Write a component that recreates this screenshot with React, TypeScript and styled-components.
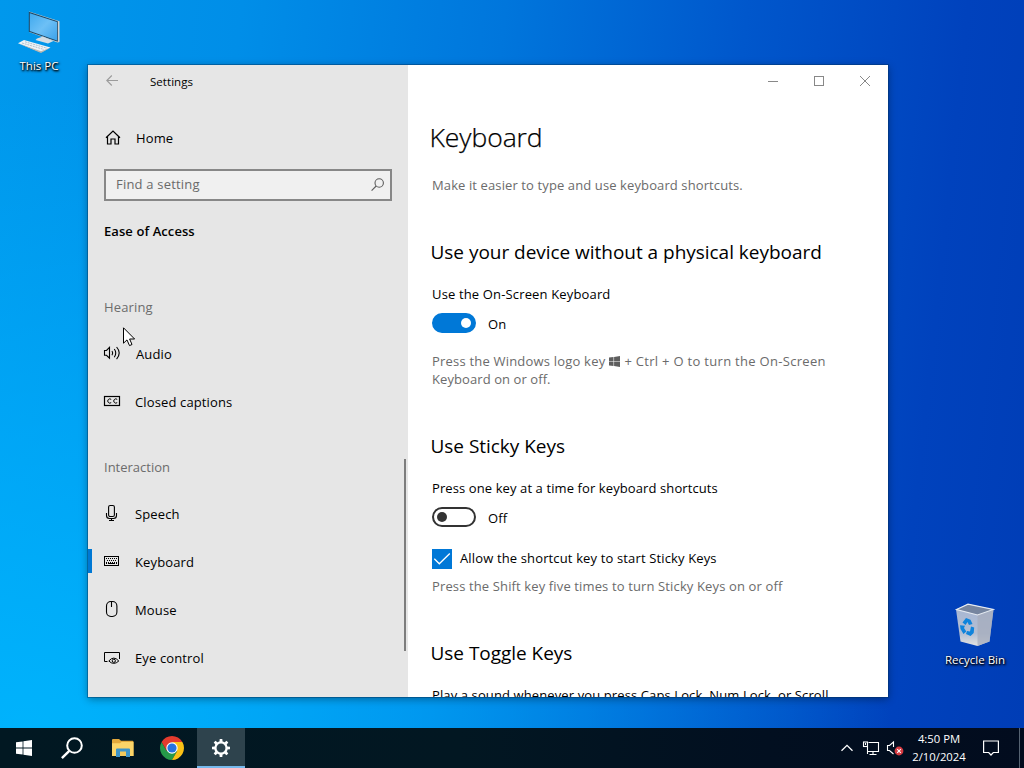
import React from "react";
import styled, { createGlobalStyle } from "styled-components";

const GlobalStyle = createGlobalStyle`
  * { box-sizing: border-box; }
  body {
    margin: 0;
    overflow: hidden;
    font-family: "Open Sans", "Noto Sans", sans-serif;
    font-size: 13px;
    line-height: 20px;
    color: #000;
  }
  svg { display: block; flex: none; overflow: visible; }
`;

const Screen = styled.div`
  position: relative;
  display: flex;
  flex-direction: column;
  width: 1024px;
  height: 768px;
  overflow: hidden;
`;

const Desktop = styled.div`
  position: relative;
  flex: 1;
  background:
    radial-gradient(ellipse 860px 640px at 3% 100%, rgba(0, 184, 255, 0.85), rgba(0, 180, 255, 0.55) 45%, rgba(0, 170, 255, 0)),
    linear-gradient(96deg, #0098ec 0%, #008ee8 22%, #0076dc 46%, #0057cc 68%, #0042bd 88%, #003db6 100%);
`;

const Shortcut = styled.div<{ $x: number; $y: number }>`
  position: absolute;
  left: ${(p) => p.$x}px;
  top: ${(p) => p.$y}px;
  width: 76px;
  display: flex;
  flex-direction: column;
  align-items: center;
`;

const ShortcutLabel = styled.span<{ $gap: number }>`
  margin-top: ${(p) => p.$gap}px;
  font-size: 11.5px;
  line-height: 18px;
  color: #fff;
  white-space: nowrap;
  text-shadow: 1px 1px 2px #000, 0 1px 2px rgba(0, 0, 0, 0.8), 1px 1px 3px rgba(0, 0, 0, 0.7);
`;

const Window = styled.div`
  position: absolute;
  left: 88px;
  top: 65px;
  width: 800px;
  height: 632px;
  display: flex;
  background: #fff;
  box-shadow: 0 0 0 1px rgba(0, 50, 95, 0.4), 0 2px 8px rgba(0, 0, 0, 0.38);
`;

const Sidebar = styled.aside`
  position: relative;
  width: 320px;
  display: flex;
  flex-direction: column;
  background: #e6e6e6;
`;

const TitleBar = styled.div`
  display: flex;
  align-items: center;
  height: 32px;
  padding-left: 18px;
  gap: 32px;
`;

const TitleText = styled.span`
  font-size: 11.5px;
  letter-spacing: 0.05px;
  padding-top: 1px;
`;

const NavItem = styled.div<{ $active?: boolean; $gap?: number }>`
  display: flex;
  align-items: center;
  height: 48px;
  padding-left: 12px;
  gap: ${(p) => p.$gap ?? 15}px;
  letter-spacing: 0.13px;
  border-left: 4px solid transparent;
  background: ${(p) =>
    p.$active ? "linear-gradient(#0078d4, #0078d4) 0 11px / 4px 24px no-repeat border-box" : "none"};
`;

const IconBox = styled.span`
  display: flex;
  width: 16px;
  height: 16px;
  margin-top: -2px;
`;

const HomeSlot = styled.div`
  margin-top: 17px;
`;

const SearchBox = styled.div`
  display: flex;
  align-items: center;
  justify-content: space-between;
  width: 288px;
  height: 32px;
  margin: 7px 0 0 16px;
  padding: 0 6px 2px 10px;
  border: 2px solid #878787;
  background: #f0f0f0;
  color: #6a6a6a;
  letter-spacing: 0.2px;
`;

const Category = styled.div`
  margin: 20px 0 0 16px;
  height: 20px;
  font-weight: 600;
  letter-spacing: 0.08px;
`;

const GroupLabel = styled.div<{ $top: number; $bottom: number; $track: number }>`
  margin: ${(p) => p.$top}px 0 ${(p) => p.$bottom}px 16px;
  height: 20px;
  color: #6c6c6c;
  letter-spacing: ${(p) => p.$track}px;
`;

const ScrollThumb = styled.div`
  position: absolute;
  right: 2px;
  top: 394px;
  width: 2px;
  height: 192px;
  background: #7d7d7d;
`;

const Main = styled.main`
  flex: 1;
  display: flex;
  flex-direction: column;
  overflow: hidden;
  padding-left: 24px;
`;

const Controls = styled.div`
  display: flex;
  justify-content: flex-end;
  flex: none;
  height: 32px;
`;

const ControlButton = styled.div`
  display: flex;
  align-items: center;
  justify-content: center;
  width: 46px;
`;

const PageTitle = styled.h1`
  margin: 22px 0 0 -2.5px;
  flex: none;
  height: 36px;
  font-size: 26.5px;
  font-weight: 300;
  line-height: 36px;
  letter-spacing: -0.06px;
  -webkit-text-stroke: 0.25px #000;
`;

const SectionTitle = styled.h2<{ $top: number }>`
  margin: ${(p) => p.$top}px 0 18px -1.5px;
  flex: none;
  height: 28px;
  font-size: 19px;
  font-weight: 400;
  line-height: 28px;
  letter-spacing: -0.03px;
`;

const Line = styled.div<{ $top?: number; $muted?: boolean; $track?: number; $lh?: number }>`
  margin: ${(p) => p.$top ?? 0}px 0 0;
  flex: none;
  line-height: ${(p) => p.$lh ?? 20}px;
  letter-spacing: ${(p) => p.$track ?? 0.11}px;
  color: ${(p) => (p.$muted ? "#6b6b6b" : "#000")};
  white-space: nowrap;
`;

const Tracked = styled.span<{ $track: number }>`
  letter-spacing: ${(p) => p.$track}px;
`;

const ControlRow = styled.div<{ $top: number; $gap: number }>`
  display: flex;
  align-items: center;
  flex: none;
  gap: ${(p) => p.$gap}px;
  height: 20px;
  margin-top: ${(p) => p.$top}px;
`;

const ControlText = styled.span<{ $shift: number }>`
  padding-top: ${(p) => (p.$shift > 0 ? p.$shift * 2 : 0)}px;
  padding-bottom: ${(p) => (p.$shift < 0 ? -p.$shift * 2 : 0)}px;
  letter-spacing: 0.14px;
`;

const Switch = styled.span<{ $on?: boolean }>`
  display: flex;
  align-items: center;
  justify-content: ${(p) => (p.$on ? "flex-end" : "flex-start")};
  width: 44px;
  height: 20px;
  padding: 0 3px;
  border-radius: 10px;
  border: 2px solid ${(p) => (p.$on ? "#0078d7" : "#333")};
  background: ${(p) => (p.$on ? "#0078d7" : "#fff")};

  &::after {
    content: "";
    width: 10px;
    height: 10px;
    border-radius: 50%;
    background: ${(p) => (p.$on ? "#fff" : "#333")};
  }
`;

const CheckBox = styled.span`
  width: 20px;
  height: 20px;
  background: #0078d7;
`;

const InlineLogo = styled.span`
  display: inline-block;
  margin: 0 4px 0 4px;
  vertical-align: -1px;
`;

const Cursor = styled.div`
  position: absolute;
  left: 123px;
  top: 327px;
`;

const Taskbar = styled.footer`
  display: flex;
  height: 40px;
  background: linear-gradient(90deg, #011822 0%, #021722 45%, #020f20 75%, #020c1e 100%);
`;

const TaskButton = styled.div<{ $width?: number; $active?: boolean }>`
  display: flex;
  align-items: center;
  justify-content: center;
  width: ${(p) => p.$width ?? 48}px;
  margin-left: ${(p) => (p.$active ? 3 : 0)}px;
  background: ${(p) => (p.$active ? "#2e434d" : "transparent")};
  box-shadow: ${(p) => (p.$active ? "inset 0 -2px #76b9ed" : "none")};
`;

const Tray = styled.div`
  display: flex;
  align-items: center;
  margin-left: auto;
`;

const TraySlot = styled.div<{ $width: number }>`
  display: flex;
  justify-content: center;
  width: ${(p) => p.$width}px;
`;

const Clock = styled.div`
  display: flex;
  flex-direction: column;
  align-items: center;
  width: 68px;
  padding: 0 4px 1px 0;
  color: #fff;
  font-size: 11.3px;
  line-height: 18px;
  white-space: nowrap;
`;

const ShowDesktop = styled.div`
  width: 5px;
  height: 40px;
  border-left: 1px solid #566372;
`;

const WinLogo = ({ size, color }: { size: number; color: string }) => (
  <svg width={size} height={size} viewBox="0 0 16 16" fill={color}>
    <path d="M0 2.3 6.6 1.4V7.6H0zM7.4 1.3 16 0V7.6H7.4zM0 8.4H6.6V14.6L0 13.7zM7.4 8.4H16V16L7.4 14.7z" />
  </svg>
);

const line = { fill: "none", stroke: "#000", strokeWidth: 1 };

const HomeIcon = () => (
  <svg width="16" height="16" viewBox="0 0 16 16" {...line} strokeWidth={1.2}>
    <path d="M2 8.7 9 2.1 16 8.7M3.5 7.5V15H7V10H11V15H14.5V7.5" />
  </svg>
);

const AudioIcon = () => (
  <svg width="16" height="16" viewBox="0 0 16 16" {...line} strokeWidth={1.1}>
    <path d="M.5 5.5H2.5L5.5 2.3V13.2L2.5 10.3H.5zM8 6Q9.5 8 8 10.3M10.3 4Q13.2 8 10.3 12.3M12.6 2Q17.8 8 12.6 14.1" />
  </svg>
);

const CaptionsIcon = () => (
  <svg width="16" height="16" viewBox="0 0 16 16" {...line}>
    <rect x=".5" y="3.5" width="15" height="9" strokeWidth="1.2" />
    <path d="M7.2 6.4A2.1 2.1 0 1 0 7.2 9.6M13.2 6.4A2.1 2.1 0 1 0 13.2 9.6" />
  </svg>
);

const MicIcon = () => (
  <svg width="16" height="16" viewBox="0 0 16 16" {...line} strokeWidth={1.1}>
    <rect x="4.6" y=".5" width="5.8" height="11" rx="1.6" />
    <path d="M2.5 8V10.5Q2.5 13.5 5.5 13.5H9.5Q12.5 13.5 12.5 10.5V8M7.5 13.5V15.5M5 15.5H10" />
  </svg>
);

const KeyboardIcon = () => (
  <svg width="16" height="16" viewBox="0 0 16 16" {...line}>
    <rect x=".5" y="3.5" width="14" height="9" />
    <path d="M2 5.5H13M3 7.5H13M2 9.5H13" strokeDasharray="1 1" />
    <path d="M2 10.5H3M4 10.5H11M12 10.5H13" />
  </svg>
);

const MouseIcon = () => (
  <svg width="16" height="16" viewBox="0 0 16 16" {...line} strokeWidth={1.1}>
    <rect x="2.5" y=".5" width="10.4" height="15" rx="4.4" />
    <path d="M7.5 1V6" />
  </svg>
);

const EyeIcon = () => (
  <svg width="16" height="16" viewBox="0 0 16 16" {...line}>
    <path d="M3.5 12.5H.5V3.5H15.5V10" />
    <path d="M4.8 12Q9.7 6.2 14.8 12Q9.7 16.8 4.8 12z" />
    <circle cx="9.8" cy="11.8" r="1.6" />
  </svg>
);

const ThisPcIcon = () => (
  <svg width="44" height="44" viewBox="0 0 44 44">
    <defs>
      <linearGradient id="pcScreen" x1="0" y1="0" x2="1" y2="1">
        <stop offset="0" stopColor="#3fa9ee" />
        <stop offset=".5" stopColor="#6dc0f6" />
        <stop offset="1" stopColor="#3ba2ea" />
      </linearGradient>
    </defs>
    <path d="M12 .5 42.5 10.2V31L40.5 31.5 12 21z" fill="#cfd3d4" />
    <path d="M11.8.8 40.8 10.2V30.8L11.8 20.8z" fill="#1c4765" />
    <path d="M12.8 2.2 40 11V29.6L12.8 20z" fill="url(#pcScreen)" />
    <path d="M20 27.5 26 25.5 28 26.5 36.5 30 31 32.5 18.5 29z" fill="#d4dde4" />
    <path d="M1 32.3 7 29 33.5 36.5 25 41 23 41z" fill="#edf3f7" />
    <path d="M1 32.3 24 40.3 33.5 36.5 24 42z" fill="#b9b5ae" />
    <path d="M5 32 27 38.5M8 30.8 30 37.2" stroke="#9fb2c1" strokeWidth=".8" strokeDasharray="2 .8" />
  </svg>
);

const BinIcon = () => (
  <svg width="40" height="44" viewBox="0 0 40 44">
    <defs>
      <linearGradient id="binFront" x1="0" y1="0" x2="0" y2="1">
        <stop offset="0" stopColor="#a4b4d2" />
        <stop offset=".7" stopColor="#b4bfd3" />
        <stop offset="1" stopColor="#e3e3e1" />
      </linearGradient>
    </defs>
    <path d="M1 6.5 13 1 38.5 6.5 34.5 38.5 22.5 43 5.5 38.5z" fill="url(#binFront)" />
    <path d="M22.5 12 38.5 6.5 34.5 38.5 22.5 43z" fill="#a6acbc" fillOpacity=".75" />
    <path d="M1.5 6.5 13 1.2 38.3 6.5 22.5 12z" fill="#76859f" />
    <path d="M1.5 6.5 13 1.2 38.3 6.5 22.5 12z" fill="none" stroke="#e6ebf2" strokeWidth="1.1" />
    <g fill="#0f84dc">
      <path d="M7.5 19.5 11 15 15.5 16.8 17.5 21 14 22 12.5 19 10.5 22z" />
      <path d="M5 22.3 10 22.8 9 25 11.3 28.5 8.5 31 5.5 26z" />
      <path d="M12 28 15 28.5 16 23.5 19.2 24.5 18.7 30 15.5 33 11 31z" />
    </g>
  </svg>
);

const FolderIcon = () => (
  <svg width="22" height="18" viewBox="0 0 22 18">
    <path d="M0 1Q0 0 1 0H7L9 1.8H20.5Q21.5 1.8 21.5 3V17H0z" fill="#e3a93c" />
    <path d="M0 4.2H8L9.5 3H21.5V17H0z" fill="#fcd568" />
    <path d="M4 18V10.5Q4 9.5 5 9.5H17Q18 9.5 18 10.5V18H14V13H8V18z" fill="#3d94c9" />
    <path d="M8 12.5H14V17H8z" fill="#f3c95b" />
  </svg>
);

const ChromeIcon = () => (
  <svg width="24" height="24" viewBox="0 0 24 24">
    <path d="M1.61 6A12 12 0 0 0 12 24L17.2 15 12 12 6.8 15z" fill="#269a49" />
    <path d="M22.39 6A12 12 0 0 1 12 24L17.2 15 12 6z" fill="#fbc116" />
    <path d="M1.61 6A12 12 0 0 1 22.39 6H12L6.8 15z" fill="#e33b2e" />
    <circle cx="12" cy="12" r="5.7" fill="#fff" />
    <circle cx="12" cy="12" r="4.6" fill="#2673e0" />
  </svg>
);

const GearIcon = () => (
  <svg width="20" height="20" viewBox="-10 -10 20 20">
    <circle r="5.6" fill="none" stroke="#fff" strokeWidth="2.3" />
    {[0, 45, 90, 135, 180, 225, 270, 315].map((a) => (
      <path key={a} d="M-1.6 -6 -1.3 -9H1.3L1.6 -6z" fill="#fff" transform={`rotate(${a})`} />
    ))}
  </svg>
);

const NAV_HEARING = [
  { label: "Audio", icon: <AudioIcon />, gap: 16 },
  { label: "Closed captions", icon: <CaptionsIcon />, gap: 15 },
];

const NAV_INTERACTION = [
  { label: "Speech", icon: <MicIcon /> },
  { label: "Keyboard", icon: <KeyboardIcon />, active: true },
  { label: "Mouse", icon: <MouseIcon /> },
  { label: "Eye control", icon: <EyeIcon /> },
];

export default function App() {
  return (
    <Screen>
      <GlobalStyle />
      <Desktop>
        <Shortcut $x={1} $y={11}>
          <ThisPcIcon />
          <ShortcutLabel $gap={2}>This PC</ShortcutLabel>
        </Shortcut>
        <Shortcut $x={937} $y={603}>
          <BinIcon />
          <ShortcutLabel $gap={4}>Recycle Bin</ShortcutLabel>
        </Shortcut>

        <Window>
          <Sidebar>
            <TitleBar>
              <svg width="12" height="12" viewBox="0 0 12 12" fill="none" stroke="#9b9b9b" strokeWidth="1.1">
                <path d="M12 5.5H.8M5.8.5.8 5.5 5.8 10.5" />
              </svg>
              <TitleText>Settings</TitleText>
            </TitleBar>
            <HomeSlot>
              <NavItem $gap={16}>
                <IconBox><HomeIcon /></IconBox>
                Home
              </NavItem>
            </HomeSlot>
            <SearchBox>
              Find a setting
              <svg width="13" height="13" viewBox="0 0 13 13" fill="none" stroke="#5c5c5c" strokeWidth="1.1">
                <circle cx="8.2" cy="5" r="4.2" />
                <path d="M5.2 8 .6 12.6" />
              </svg>
            </SearchBox>
            <Category>Ease of Access</Category>
            <GroupLabel $top={56} $bottom={13} $track={0.15}>Hearing</GroupLabel>
            {NAV_HEARING.map((n) => (
              <NavItem key={n.label} $gap={n.gap}>
                <IconBox>{n.icon}</IconBox>
                {n.label}
              </NavItem>
            ))}
            <GroupLabel $top={31} $bottom={13} $track={0}>Interaction</GroupLabel>
            {NAV_INTERACTION.map((n) => (
              <NavItem key={n.label} $active={n.active}>
                <IconBox>{n.icon}</IconBox>
                {n.label}
              </NavItem>
            ))}
            <ScrollThumb />
          </Sidebar>

          <Main>
            <Controls>
              <ControlButton>
                <svg width="10" height="10" stroke="#888"><path d="M0 5.5H10" /></svg>
              </ControlButton>
              <ControlButton>
                <svg width="10" height="10" stroke="#888" fill="none"><rect x=".5" y=".5" width="9" height="9" /></svg>
              </ControlButton>
              <ControlButton>
                <svg width="10" height="10" stroke="#888"><path d="M0 0 10 10M10 0 0 10" /></svg>
              </ControlButton>
            </Controls>
            <PageTitle>Keyboard</PageTitle>
            <Line $top={20} $muted>Make it easier to type and use keyboard shortcuts.</Line>

            <SectionTitle $top={43}>Use your device without a physical keyboard</SectionTitle>
            <Line $track={0.15}>Use the On-Screen Keyboard</Line>
            <ControlRow $top={9} $gap={12}>
              <Switch $on />
              <ControlText $shift={1}>On</ControlText>
            </ControlRow>
            <Line $top={19} $muted $lh={18} $track={0.2}>
              Press the Windows logo key
              <InlineLogo><WinLogo size={11} color="#5e5e5e" /></InlineLogo>
              <Tracked $track={0.3}>+ Ctrl + O to turn the On-Screen</Tracked>
              <br />
              <Tracked $track={0.08}>Keyboard on or off.</Tracked>
            </Line>

            <SectionTitle $top={44}>Use Sticky Keys</SectionTitle>
            <Line $track={0.1}>Press one key at a time for keyboard shortcuts</Line>
            <ControlRow $top={9} $gap={12}>
              <Switch />
              <ControlText $shift={1}>Off</ControlText>
            </ControlRow>
            <ControlRow $top={22} $gap={8}>
              <CheckBox>
                <svg width="20" height="20" fill="none" stroke="#fff" strokeWidth="1.3">
                  <path d="M2.3 9.8 7.3 14.8 17.8 4.5" />
                </svg>
              </CheckBox>
              <ControlText $shift={-1}>Allow the shortcut key to start Sticky Keys</ControlText>
            </ControlRow>
            <Line $top={8} $muted $lh={18} $track={0.13}>
              Press the Shift key five times to turn Sticky Keys on or off
            </Line>

            <SectionTitle $top={44}>Use Toggle Keys</SectionTitle>
            <Line>Play a sound whenever you press Caps Lock, Num Lock, or Scroll</Line>
          </Main>
        </Window>

        <Cursor>
          <svg width="13" height="20" viewBox="0 0 13 20">
            <path
              d="M.5 .8V16.2L4 12.9 6.5 18.6 9 17.5 6.6 12H11.6z"
              fill="#fff"
              stroke="#000"
              strokeWidth="1"
            />
          </svg>
        </Cursor>
      </Desktop>

      <Taskbar>
        <TaskButton><WinLogo size={16} color="#fff" /></TaskButton>
        <TaskButton>
          <svg width="22" height="22" viewBox="0 0 22 22" fill="none" stroke="#fff" strokeWidth="2">
            <circle cx="13.5" cy="8.5" r="7.3" />
            <path d="M8.3 13.8.9 21.2" strokeWidth="2.4" />
          </svg>
        </TaskButton>
        <TaskButton $width={54}><FolderIcon /></TaskButton>
        <TaskButton $width={44}><ChromeIcon /></TaskButton>
        <TaskButton $active><GearIcon /></TaskButton>
        <Tray>
          <TraySlot $width={24}>
            <svg width="12" height="8" fill="none" stroke="#fff" strokeWidth="1.3">
              <path d="M.5 6.8 6 1.3 11.5 6.8" />
            </svg>
          </TraySlot>
          <TraySlot $width={24}>
            <svg width="16" height="14" fill="none" stroke="#fff" strokeWidth="1.1">
              <path d="M5.5 1.5H15.5V10.5H4.5M4.5 6V13M10 10.5V13.5M6.5 13.5H13.5" />
              <rect x=".5" y="1" width="4" height="4.5" />
              <path d="M2.5 2V4" />
            </svg>
          </TraySlot>
          <TraySlot $width={24}>
            <svg width="17" height="16" fill="none" stroke="#fff" strokeWidth="1.1">
              <path d="M6.5 7V2L2.5 5.5H.5V10.5H2.5L6.5 14" />
              <circle cx="12" cy="11" r="4.4" fill="#d63a41" stroke="none" />
              <path d="M10.2 9.2 13.8 12.8M13.8 9.2 10.2 12.8" />
            </svg>
          </TraySlot>
          <Clock>
            <span>4:50 PM</span>
            <span>2/10/2024</span>
          </Clock>
          <TraySlot $width={32}>
            <svg width="16" height="16" fill="none" stroke="#fff" strokeWidth="1.2">
              <path d="M.6 1H15.4V12.5H10.3L8 15 5.7 12.5H.6z" />
            </svg>
          </TraySlot>
          <TraySlot $width={12} />
          <ShowDesktop />
        </Tray>
      </Taskbar>
    </Screen>
  );
}
